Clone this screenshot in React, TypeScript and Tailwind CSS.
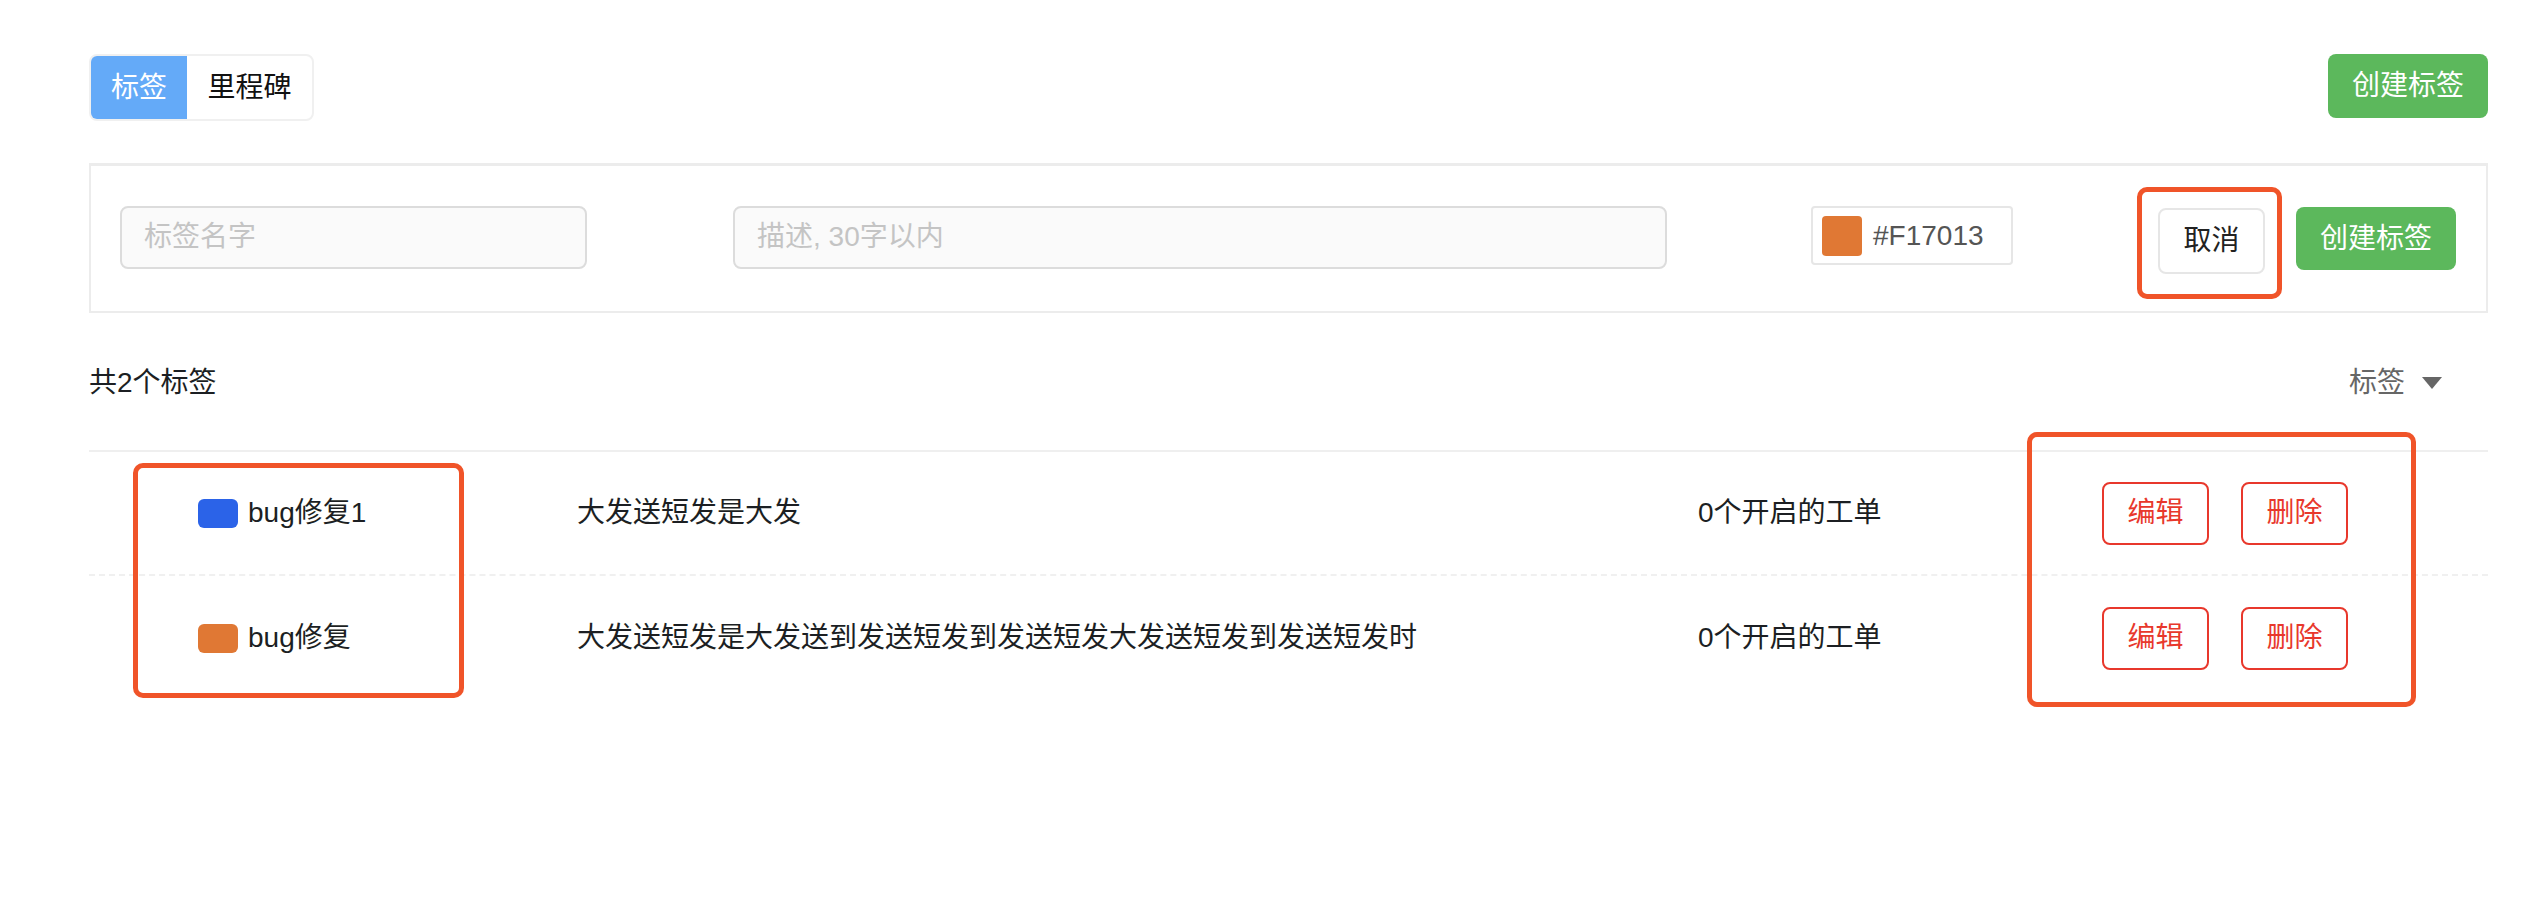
import React from "react";

type Label = { name: string; color: string; desc: string; count: string };

const labels: Label[] = [
  { name: "bug修复1", color: "bg-[#2b63e8]", desc: "大发送短发是大发", count: "0个开启的工单" },
  {
    name: "bug修复",
    color: "bg-[#e07834]",
    desc: "大发送短发是大发送到发送短发到发送短发大发送短发到发送短发时",
    count: "0个开启的工单",
  },
];

function LabelRow({ label, last }: { label: Label; last: boolean }) {
  return (
    <div
      className={
        last
          ? "grid grid-cols-[488px_1121px_404px_1fr] items-center h-[124px]"
          : "grid grid-cols-[488px_1121px_404px_1fr] items-center h-[124px] border-b-2 border-dashed border-[#f0f0f0]"
      }
    >
      <div className="flex items-center pl-[109px] gap-[10px]">
        <span className={`w-[40px] h-[29px] rounded-[6px] ${label.color}`} />
        <span className="text-[#1c1f23]">{label.name}</span>
      </div>
      <div className="text-[#1c1f23]">{label.desc}</div>
      <div className="text-[#1c1f23]">{label.count}</div>
      <div className="flex items-center gap-[32px]">
        <button className="w-[107px] h-[63px] border-2 border-[#e8382c] rounded-lg text-[#e8382c] bg-white">编辑</button>
        <button className="w-[107px] h-[63px] border-2 border-[#e8382c] rounded-lg text-[#e8382c] bg-white">删除</button>
      </div>
    </div>
  );
}

export default function App() {
  return (
    <div className="relative w-[2526px] h-[902px] bg-white text-[28px] leading-[40px] font-['Liberation_Sans','Noto_Sans_CJK_SC',sans-serif]">
      <div className="ml-[89px] w-[2399px] pt-[54px]">
        {/* tabs + create */}
        <div className="flex justify-between items-start">
          <div className="flex h-[67px] border-2 border-[#f0f0f0] rounded-lg overflow-hidden">
            <div className="w-[96px] flex items-center justify-center bg-[#64aaf8] text-white">标签</div>
            <div className="w-[125px] flex items-center justify-center text-[#111]">里程碑</div>
          </div>
          <button className="w-[160px] h-[64px] bg-[#5cb85c] text-white rounded-lg">创建标签</button>
        </div>

        {/* create form */}
        <div className="mt-[42px] h-[150px] border-2 border-t-[3px] border-[#ececec] flex items-center pl-[29px]">
          <input
            className="w-[467px] h-[63px] bg-[#fafafa] border-2 border-[#dcdcdc] rounded-lg px-[22px] outline-none placeholder:text-[#c4c4c4] -mt-[3px]"
            placeholder="标签名字"
          />
          <input
            className="ml-[146px] w-[934px] h-[63px] bg-[#fafafa] border-2 border-[#dcdcdc] rounded-lg px-[22px] outline-none placeholder:text-[#c4c4c4] -mt-[3px]"
            placeholder="描述, 30字以内"
          />
          <div className="ml-[144px] w-[202px] h-[59px] border-2 border-[#e6e6e6] rounded-[4px] flex items-center pl-[9px] gap-[11px] -mt-[6px]">
            <span className="w-[40px] h-[40px] rounded-[4px] bg-[#e07834]" />
            <span className="text-[#555]">#F17013</span>
          </div>
          <button className="ml-[145px] w-[107px] h-[66px] border-2 border-[#e6e6e6] rounded-lg bg-white text-[#222] mt-[4px]">取消</button>
          <button className="ml-[31px] w-[160px] h-[63px] bg-[#5cb85c] text-white rounded-lg">创建标签</button>
        </div>

        {/* list header */}
        <div className="mt-[50px] flex justify-between items-center h-[40px]">
          <span className="text-[#1c1f23]">共2个标签</span>
          <span className="flex items-center gap-[17px] text-[#666] pr-[46px]">
            标签
            <svg width="20" height="12" viewBox="0 0 20 12">
              <path d="M0 0H20L10 12Z" fill="#666" />
            </svg>
          </span>
        </div>

        <div className="mt-[47px] border-t-2 border-[#efefef]">
          {labels.map((l, i) => (
            <LabelRow key={l.name} label={l} last={i === labels.length - 1} />
          ))}
        </div>
      </div>

      {/* annotation boxes */}
      <div className="absolute left-[2137px] top-[187px] w-[145px] h-[112px] border-[5px] border-[#f05429] rounded-[10px]" />
      <div className="absolute left-[133px] top-[463px] w-[331px] h-[235px] border-[5px] border-[#f05429] rounded-[10px]" />
      <div className="absolute left-[2027px] top-[432px] w-[389px] h-[275px] border-[5px] border-[#f05429] rounded-[10px]" />
    </div>
  );
}
